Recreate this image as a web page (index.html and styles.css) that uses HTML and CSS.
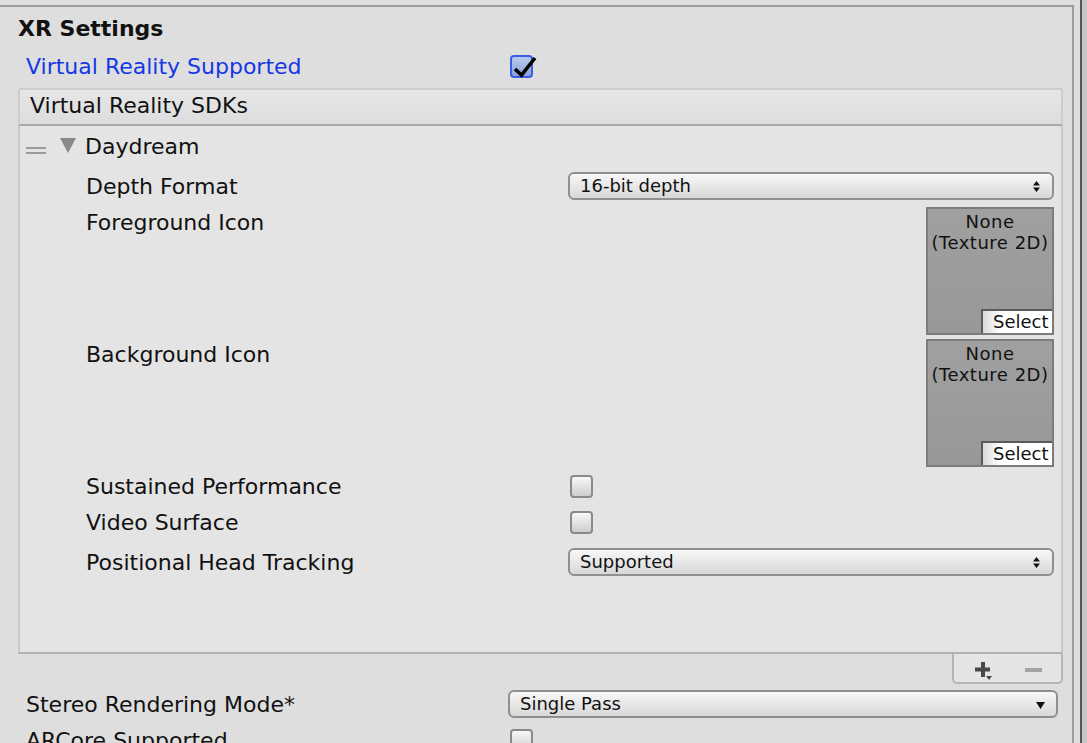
FILE: index.html
```html
<!DOCTYPE html>
<html>
<head>
<meta charset="utf-8">
<title>XR Settings</title>
<link rel="stylesheet" href="styles.css">
</head>
<body>
<div class="page">
  <div class="inspector">
    <div class="title">XR Settings</div>

    <div class="row vr-row">
      <span class="row-label blue">Virtual Reality Supported</span>
      <span class="check on">
        <svg class="tick" width="30" height="24" viewBox="0 0 30 24"><path d="M5 13 L11.5 19 L25 2" fill="none" stroke="#000" stroke-width="3.6" stroke-linejoin="miter" stroke-linecap="butt"/></svg>
      </span>
    </div>

    <div class="sdk">
      <div class="sdk-head">Virtual Reality SDKs</div>
      <div class="sdk-body">
        <div class="item-head">
          <span class="handle"></span>
          <span class="tri"></span>
          <span class="item-name">Daydream</span>
        </div>

        <div class="prop prop-dd">
          <span class="plabel">Depth Format</span>
          <div class="dropdown">
            <span>16-bit depth</span>
            <svg class="updown" width="7" height="11" viewBox="0 0 7 11"><path d="M3.5 0 L7 4.5 L0 4.5 Z M0 6.5 L7 6.5 L3.5 11 Z" fill="#111"/></svg>
          </div>
        </div>

        <div class="prop prop-tex first-tex">
          <span class="plabel">Foreground Icon</span>
          <div class="tex">
            <div>None</div>
            <div>(Texture 2D)</div>
            <div class="select">Select</div>
          </div>
        </div>

        <div class="prop prop-tex">
          <span class="plabel">Background Icon</span>
          <div class="tex">
            <div>None</div>
            <div>(Texture 2D)</div>
            <div class="select">Select</div>
          </div>
        </div>

        <div class="prop prop-check first-check">
          <span class="plabel">Sustained Performance</span>
          <span class="check"></span>
        </div>

        <div class="prop prop-check">
          <span class="plabel">Video Surface</span>
          <span class="check"></span>
        </div>

        <div class="prop prop-dd2">
          <span class="plabel">Positional Head Tracking</span>
          <div class="dropdown">
            <span>Supported</span>
            <svg class="updown" width="7" height="11" viewBox="0 0 7 11"><path d="M3.5 0 L7 4.5 L0 4.5 Z M0 6.5 L7 6.5 L3.5 11 Z" fill="#111"/></svg>
          </div>
        </div>
      </div>
      <div class="sdk-foot-wrap">
        <div class="sdk-foot">
          <svg width="107" height="28" viewBox="0 0 107 28">
            <rect x="27" y="8" width="4" height="15" fill="#474747"/>
            <rect x="21" y="13.5" width="15" height="4" fill="#474747"/>
            <path d="M32 22 L38 22 L35 26 Z" fill="#474747"/>
            <rect x="71" y="14" width="17" height="4" fill="#a3a3a3"/>
          </svg>
        </div>
      </div>
    </div>

    <div class="row stereo-row">
      <span class="row-label wide">Stereo Rendering Mode*</span>
      <div class="dropdown big">
        <span>Single Pass</span>
        <svg class="down" width="9" height="7" viewBox="0 0 9 7"><path d="M0 0 L9 0 L4.5 7 Z" fill="#111"/></svg>
      </div>
    </div>

    <div class="row ar-row">
      <span class="row-label wide">ARCore Supported</span>
      <span class="check ar-check"></span>
    </div>
  </div>
  <div class="edge"></div>
</div>
</body>
</html>
```

FILE: styles.css
```css
html, body {
  margin: 0;
  padding: 0;
  background: #dedede;
  overflow: hidden;
}

body {
  font-family: "DejaVu Sans", Verdana, sans-serif;
  font-size: 22px;
  line-height: 26px;
  color: #111;
  width: 1087px;
  height: 743px;
}

.page {
  display: flex;
  height: 743px;
}

.inspector {
  width: 1074px;
  flex: none;
  box-sizing: border-box;
  margin-top: 5px;
  border-top: 2px solid #9c9c9c;
  border-right: 2px solid #9c9c9c;
  padding: 8px 9px 0 18px;
}

.edge {
  flex: 1;
  background: linear-gradient(to right, #dedede 0 6px, #555 6px 8px, #c6c6c6 8px);
}

.title {
  font-weight: bold;
  height: 26px;
  padding-top: 1px;
  margin-bottom: -1px;
}

.row {
  display: flex;
  align-items: center;
}

.vr-row {
  margin-top: 11px;
  height: 28px;
}

.row-label {
  width: 492px;
  flex: none;
  box-sizing: border-box;
  padding-left: 8px;
  padding-top: 2px;
  white-space: nowrap;
}

.row-label.wide {
  width: 490px;
}

.blue {
  color: #1538e6;
}

/* checkboxes */
.check {
  position: relative;
  width: 23px;
  height: 23px;
  box-sizing: border-box;
  border: 2px solid #8a8a8a;
  border-radius: 4px;
  background: linear-gradient(#f8f8f8, #cdcdcd);
  flex: none;
}

.check.on {
  border-color: #3b5de4;
  background: linear-gradient(#b9c8ee, #8aa2dc);
}

.tick {
  position: absolute;
  left: -2px;
  top: -1px;
  overflow: visible;
}

/* SDK list */
.sdk {
  margin-top: 8px;
}

.sdk-head {
  height: 38px;
  box-sizing: border-box;
  border: 2px solid #cdcdcd;
  border-bottom-color: #a9a9a9;
  border-radius: 3px 3px 0 0;
  background: linear-gradient(#e6e6e6, #dddddd);
  padding: 3px 0 0 10px;
}

.sdk-body {
  height: 528px;
  box-sizing: border-box;
  background: #e4e4e4;
  border-left: 2px solid #c8c8c8;
  border-right: 2px solid #c8c8c8;
  border-bottom: 2px solid #b2b2b2;
  padding: 0 7px 0 6px;
}

.item-head {
  display: flex;
  align-items: center;
  height: 40px;
}

.handle {
  width: 20px;
  height: 3px;
  border-top: 2px solid #9a9a9a;
  border-bottom: 2px solid #9a9a9a;
  margin-top: 9px;
  flex: none;
}

.tri {
  width: 0;
  height: 0;
  border-left: 8.5px solid transparent;
  border-right: 8.5px solid transparent;
  border-top: 15px solid #8a8a8a;
  margin-left: 14px;
  margin-top: -1px;
  flex: none;
}

.item-name {
  margin-left: 9px;
  padding-top: 2px;
}

.prop {
  display: flex;
  align-items: center;
  padding-left: 60px;
}

.plabel {
  width: 482px;
  flex: none;
  white-space: nowrap;
  padding-top: 2px;
}

.prop-dd {
  height: 40px;
}

.prop-tex {
  align-items: flex-start;
  margin-top: 4px;
}

.prop-tex .plabel {
  padding-top: 3px;
}

.first-tex {
  margin-top: 1px;
}

.prop-check {
  height: 36px;
}

.prop-check .check {
  margin-left: 2px;
}

.first-check {
  margin-top: 1px;
}

.prop-dd2 {
  height: 44px;
}

/* dropdowns */
.dropdown {
  display: flex;
  align-items: center;
  width: 486px;
  height: 28px;
  box-sizing: border-box;
  border: 2px solid #8f8f8f;
  border-radius: 6px;
  background: linear-gradient(#f7f7f7, #d8d8d8);
  padding-left: 10px;
  font-size: 18px;
  line-height: 22px;
  color: #111;
  flex: none;
}

.dropdown.big {
  width: 550px;
}

.updown {
  margin-left: auto;
  margin-right: 12px;
}

.down {
  margin-left: auto;
  margin-right: 11px;
  margin-top: 2px;
}

/* texture pickers */
.tex {
  position: relative;
  margin-left: auto;
  width: 128px;
  height: 128px;
  box-sizing: border-box;
  border: 2px solid #7b7b7b;
  background: linear-gradient(#a0a0a0, #989898);
  text-align: center;
  font-size: 18px;
  letter-spacing: 0.5px;
  line-height: 21px;
  padding-top: 2px;
  color: #111;
}

.select {
  position: absolute;
  right: 0;
  bottom: 0;
  width: 71px;
  height: 24px;
  box-sizing: border-box;
  border-top: 2px solid #5a5a5a;
  border-left: 2px solid #5a5a5a;
  background: linear-gradient(to right, #d9d9d9, #ffffff 25%);
  text-align: left;
  padding-left: 10px;
  line-height: 22px;
  letter-spacing: 0;
}

/* footer with +/- */
.sdk-foot-wrap {
  display: flex;
  justify-content: flex-end;
}

.sdk-foot {
  width: 111px;
  height: 30px;
  box-sizing: border-box;
  border: 2px solid #b5b5b5;
  border-top: none;
  border-radius: 0 0 5px 5px;
  background: #e4e4e4;
}

.sdk-foot svg {
  display: block;
}

.stereo-row {
  margin-top: 2px;
  height: 36px;
}

.ar-row {
  height: 36px;
}

.ar-check {
  margin-left: 2px;
}
```
